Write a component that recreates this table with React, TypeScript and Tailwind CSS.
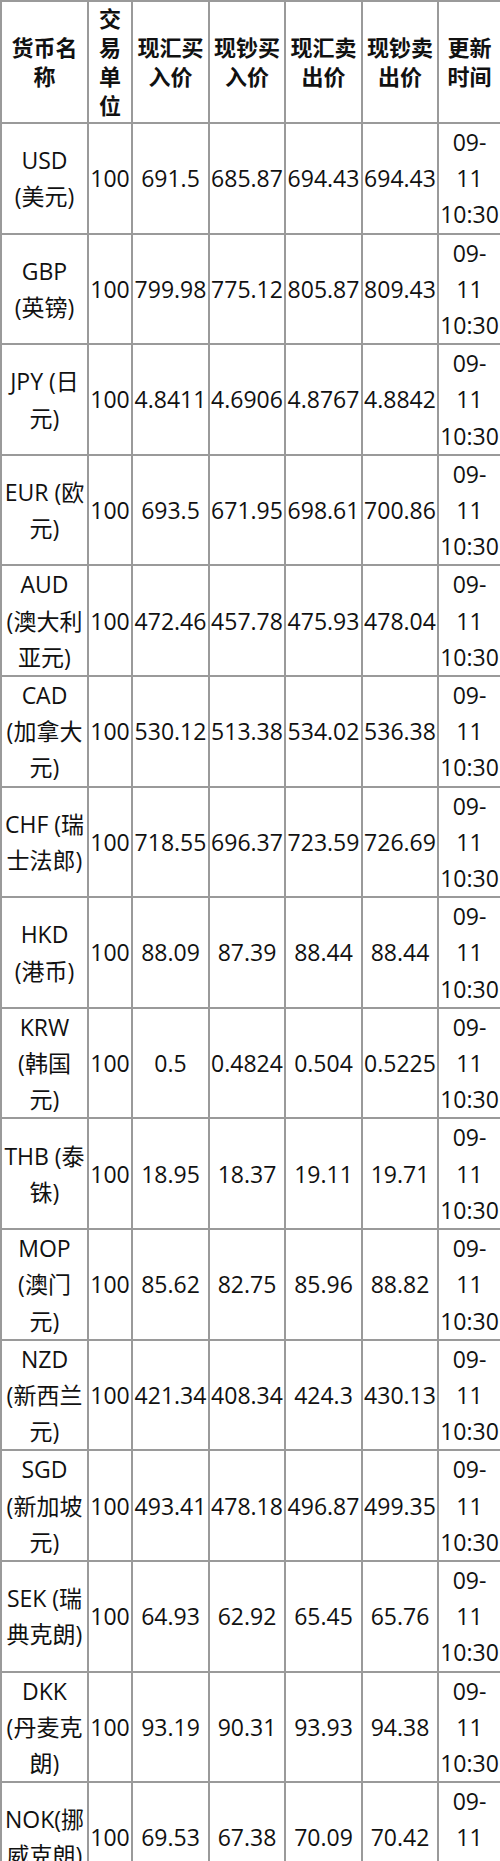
import React from "react";

type Row = {
  name: string[];
  unit: string;
  v: [string, string, string, string];
};

const rows: Row[] = [
  { name: ["USD", "(美元)"], unit: "100", v: ["691.5", "685.87", "694.43", "694.43"] },
  { name: ["GBP", "(英镑)"], unit: "100", v: ["799.98", "775.12", "805.87", "809.43"] },
  { name: ["JPY (日", "元)"], unit: "100", v: ["4.8411", "4.6906", "4.8767", "4.8842"] },
  { name: ["EUR (欧", "元)"], unit: "100", v: ["693.5", "671.95", "698.61", "700.86"] },
  { name: ["AUD", "(澳大利", "亚元)"], unit: "100", v: ["472.46", "457.78", "475.93", "478.04"] },
  { name: ["CAD", "(加拿大", "元)"], unit: "100", v: ["530.12", "513.38", "534.02", "536.38"] },
  { name: ["CHF (瑞", "士法郎)"], unit: "100", v: ["718.55", "696.37", "723.59", "726.69"] },
  { name: ["HKD", "(港币)"], unit: "100", v: ["88.09", "87.39", "88.44", "88.44"] },
  { name: ["KRW", "(韩国", "元)"], unit: "100", v: ["0.5", "0.4824", "0.504", "0.5225"] },
  { name: ["THB (泰", "铢)"], unit: "100", v: ["18.95", "18.37", "19.11", "19.71"] },
  { name: ["MOP", "(澳门", "元)"], unit: "100", v: ["85.62", "82.75", "85.96", "88.82"] },
  { name: ["NZD", "(新西兰", "元)"], unit: "100", v: ["421.34", "408.34", "424.3", "430.13"] },
  { name: ["SGD", "(新加坡", "元)"], unit: "100", v: ["493.41", "478.18", "496.87", "499.35"] },
  { name: ["SEK (瑞", "典克朗)"], unit: "100", v: ["64.93", "62.92", "65.45", "65.76"] },
  { name: ["DKK", "(丹麦克", "朗)"], unit: "100", v: ["93.19", "90.31", "93.93", "94.38"] },
  { name: ["NOK(挪", "威克朗)"], unit: "100", v: ["69.53", "67.38", "70.09", "70.42"] },
];

const headers: string[][] = [
  ["货币名", "称"],
  ["交", "易", "单", "位"],
  ["现汇买", "入价"],
  ["现钞买", "入价"],
  ["现汇卖", "出价"],
  ["现钞卖", "出价"],
  ["更新", "时间"],
];

function Lines({ lines }: { lines: string[] }) {
  return (
    <>
      {lines.map((l, i) => (
        <div key={i} className="whitespace-nowrap">
          {l}
        </div>
      ))}
    </>
  );
}

export default function App() {
  return (
    <div className="w-[500px] bg-white text-[#111] font-['Open_Sans','Noto_Sans_CJK_SC',sans-serif]">
      <table className="w-[500px] table-fixed border-separate border-spacing-0 border-l-2 border-t-2 border-[#9a9a9a]">
        <colgroup>
          <col className="w-[87px]" />
          <col className="w-[44px]" />
          <col className="w-[77px]" />
          <col className="w-[76px]" />
          <col className="w-[77px]" />
          <col className="w-[76px]" />
          <col className="w-[63px]" />
        </colgroup>
        <thead>
          <tr>
            {headers.map((h, i) => (
              <th
                key={i}
                className="h-[122px] p-0 border-r-2 border-b-2 border-[#9a9a9a] text-center align-middle text-[22px] leading-[29px] font-bold"
              >
                <Lines lines={h} />
              </th>
            ))}
          </tr>
        </thead>
        <tbody>
          {rows.map((r, i) => (
            <tr key={i}>
              <td className="p-0 border-r-2 border-b-2 border-[#9a9a9a] text-center align-middle text-[23px] leading-[36.2px]">
                <Lines lines={r.name} />
              </td>
              <td className="p-0 border-r-2 border-b-2 border-[#9a9a9a] text-center align-middle text-[23px] leading-[36.2px] whitespace-nowrap">
                {r.unit}
              </td>
              {r.v.map((v, j) => (
                <td
                  key={j}
                  className="p-0 border-r-2 border-b-2 border-[#9a9a9a] text-center align-middle text-[23px] leading-[36.2px] whitespace-nowrap"
                >
                  {v}
                </td>
              ))}
              <td className="p-0 border-r-2 border-b-2 border-[#9a9a9a] text-center align-middle text-[23px] leading-[36.2px]">
                <Lines lines={["09-", "11", "10:30"]} />
              </td>
            </tr>
          ))}
        </tbody>
      </table>
    </div>
  );
}
